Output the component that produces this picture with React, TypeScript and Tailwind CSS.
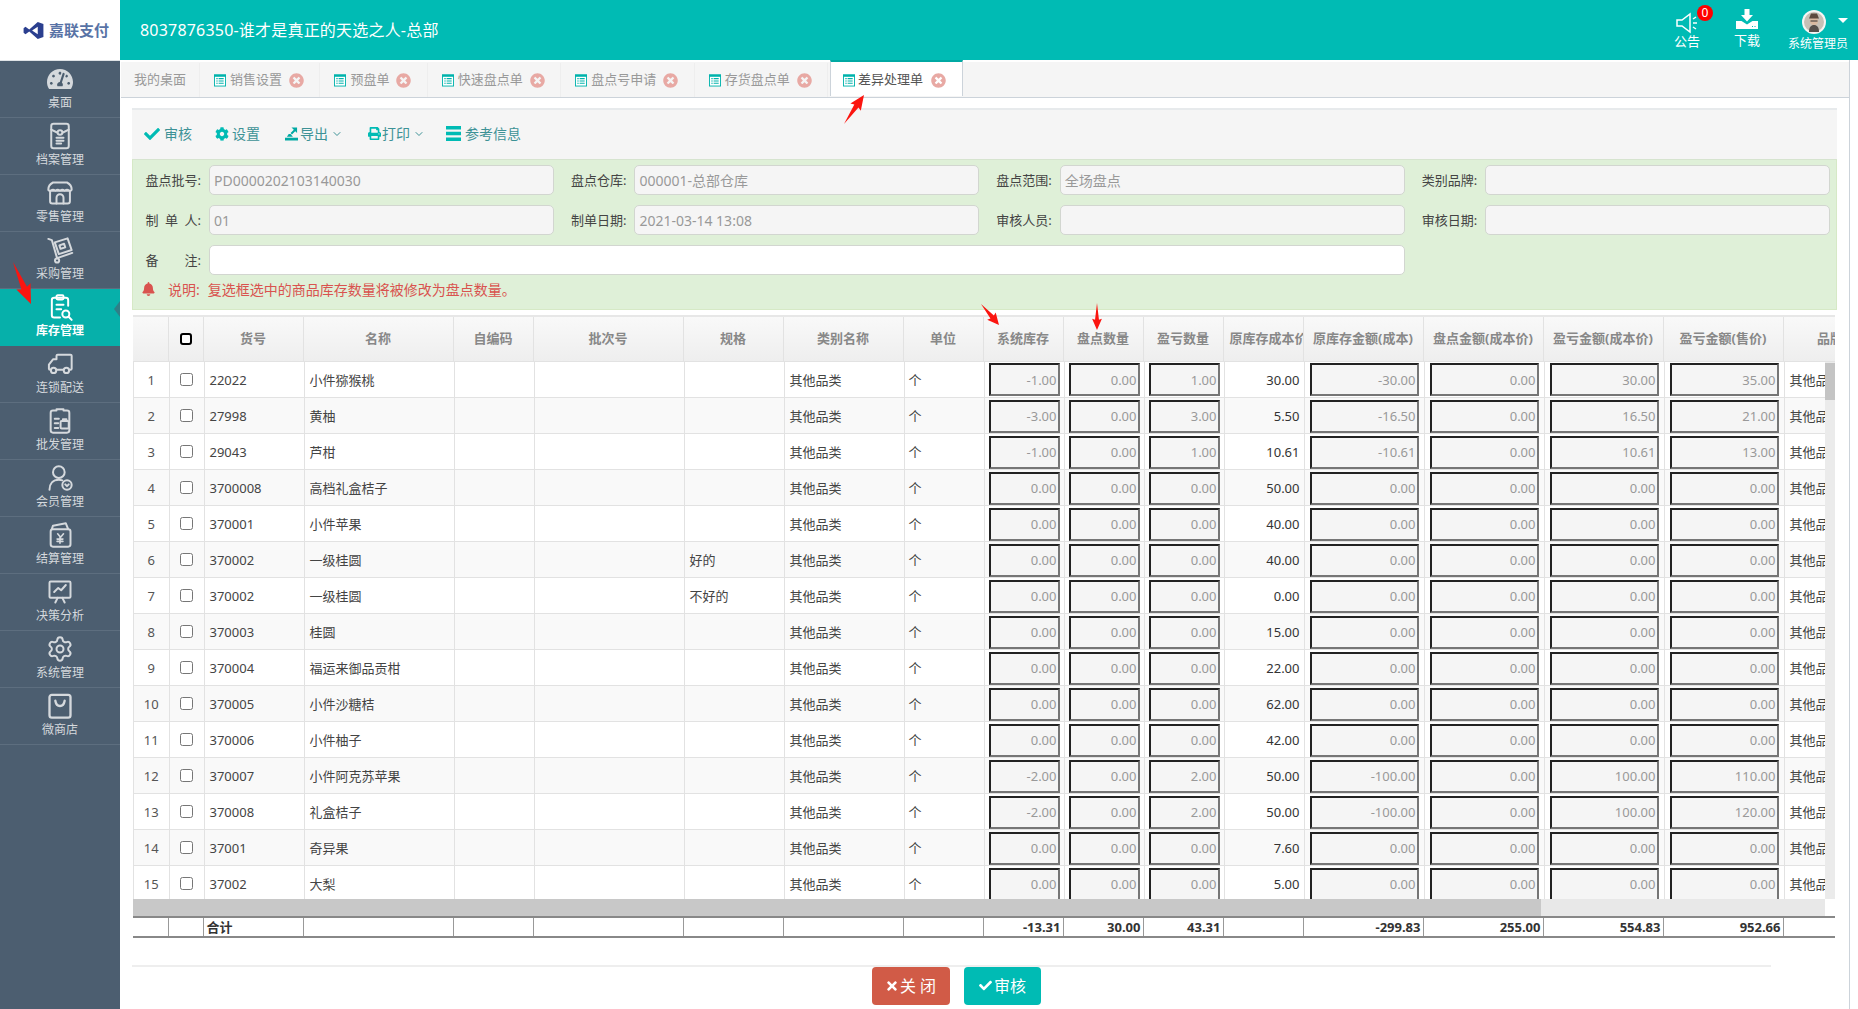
import React from 'react';
import { FaBell, FaCheck, FaCog, FaPrint, FaTachometerAlt, FaTimes, FaTimesCircle } from 'react-icons/fa';
import { ChevronDown, Settings } from 'lucide-react';

const FONT = 'font-["Noto_Sans","Noto_Sans_CJK_SC",sans-serif]';

// Sidebar icons, drawn in a 24 box
const strokeProps = { viewBox: '0 0 24 24', fill: 'none', stroke: 'currentColor', strokeWidth: 1.7, strokeLinecap: 'round' as const, strokeLinejoin: 'round' as const, className: 'w-[28px] h-[28px]' };

const ArchiveIcon = () => (
  <svg {...strokeProps}>
    <rect x="4.500" y="1.500" width="15" height="21" rx="2" />
    <path d="M4.500 6.500l5 2.500M19.500 6.500l-5 2.500M9 13.500h6M9 16h6M9 18.500h4" />
    <circle cx="12" cy="9" r="2" />
  </svg>
);
const StoreIcon = () => (
  <svg {...strokeProps}>
    <path d="M6 3h12q4 2 4 6 0 1-1 1H3q-1 0-1-1 0-4 4-6z" />
    <path d="M4 10q2-2 4 0q2-2 4 0q2-2 4 0q2-2 4 0" strokeWidth="1.200" />
    <path d="M3.500 10v9a2 2 0 0 0 2 2h13a2 2 0 0 0 2-2v-9" />
    <path d="M9 21v-5a3 3 0 0 1 6 0v5" />
  </svg>
);
const CartIcon = () => (
  <svg {...strokeProps}>
    <path d="M2 2.500l3 1 4.500 15.500 13-4.500" />
    <path d="M7.500 5.500l11-3.500 3.500 10-11 3.500z" />
    <path d="M11.500 8l4-1.300 1 3-4 1.300z" />
    <circle cx="9.500" cy="21" r="1.800" />
  </svg>
);
const StockIcon = () => (
  <svg {...strokeProps}>
    <path d="M12 21H7a2 2 0 0 1-2-2V6a2 2 0 0 1 2-2h10a2 2 0 0 1 2 2v5" />
    <rect x="9" y="2" width="6" height="3.5" rx="1" />
    <path d="M9 10h6M9 14h4" />
    <circle cx="17" cy="18" r="3" />
    <path d="M19.4 20.4L22 23" />
  </svg>
);
const TruckIcon = () => (
  <svg {...strokeProps}>
    <path d="M9 17h6M20 17h1a1 1 0 0 0 1-1V5a1 1 0 0 0-1-1H10a1 1 0 0 0-1 1v3H6l-3.5 4.5V16a1 1 0 0 0 1 1H4" />
    <circle cx="6.5" cy="17.5" r="2.3" />
    <circle cx="17.5" cy="17.5" r="2.3" />
  </svg>
);
const WholesaleIcon = () => (
  <svg {...strokeProps}>
    <path d="M9 3H6a2 2 0 0 0-2 2v15a2 2 0 0 0 2 2h12a2 2 0 0 0 2-2V5a2 2 0 0 0-2-2h-3" />
    <path d="M9 2h6M7.5 10H11M7.5 14h3M7.5 18h3" />
    <rect x="12.5" y="12" width="7" height="6.5" rx="1" />
    <path d="M14.5 12v-1.5h3V12" />
  </svg>
);
const MemberIcon = () => (
  <svg {...strokeProps}>
    <circle cx="11" cy="7" r="5" />
    <path d="M3 22c0-5 3-8.5 8-8.5 1 0 2 .2 3 .5" />
    <circle cx="18" cy="18" r="4" />
    <path d="M16.5 17.5l1.5 1.5 1.5-1.5" />
  </svg>
);
const WalletIcon = () => (
  <svg {...strokeProps}>
    <rect x="4" y="7" width="17" height="15" rx="2" />
    <path d="M5 7l1-3 11-2 2 5" />
    <path d="M10 11l2.500 3 2.500-3M12 14v5M9.500 15.500h5M9.500 17.500h5" strokeWidth="1.4" />
  </svg>
);
const ChartIcon = () => (
  <svg {...strokeProps}>
    <rect x="3" y="3" width="18" height="14" rx="1" />
    <path d="M7 12l3.500-3.500 2.500 2 4-4.500M8 21l2-4M16 21l-2-4" />
  </svg>
);
const BagIcon = () => (
  <svg {...strokeProps} strokeWidth={2}>
    <path d="M5 2.500h14a2 2 0 0 1 2 2V20a2 2 0 0 1-2 2H5a2 2 0 0 1-2-2V4.500a2 2 0 0 1 2-2z" />
    <path d="M8 7.500c.5 3 2 4.500 4 4.500s3.500-1.500 4-4.500" />
  </svg>
);

const MENU: { label: string; icon: React.ReactNode; active?: boolean }[] = [
  { label: '桌面', icon: <FaTachometerAlt className="w-[26px] h-[26px]" /> },
  { label: '档案管理', icon: <ArchiveIcon /> },
  { label: '零售管理', icon: <StoreIcon /> },
  { label: '采购管理', icon: <CartIcon /> },
  { label: '库存管理', icon: <StockIcon />, active: true },
  { label: '连锁配送', icon: <TruckIcon /> },
  { label: '批发管理', icon: <WholesaleIcon /> },
  { label: '会员管理', icon: <MemberIcon /> },
  { label: '结算管理', icon: <WalletIcon /> },
  { label: '决策分析', icon: <ChartIcon /> },
  { label: '系统管理', icon: <Settings className="w-[28px] h-[28px]" strokeWidth={1.7} /> },
  { label: '微商店', icon: <BagIcon /> },
];

const TABS = ['销售设置', '预盘单', '快速盘点单', '盘点号申请', '存货盘点单'];

const COLS = [
  'w-[35px]', 'w-[35px]', 'w-[100px]', 'w-[150px]', 'w-[80px]', 'w-[150px]', 'w-[100px]', 'w-[120px]', 'w-[80px]',
  'w-[80px]', 'w-[80px]', 'w-[80px]', 'w-[80px]', 'w-[120px]', 'w-[120px]', 'w-[120px]', 'w-[120px]', 'w-[120px]',
];

const HEADERS = [
  '', '', '货号', '名称', '自编码', '批次号', '规格', '类别名称', '单位', '系统库存', '盘点数量', '盈亏数量',
  '原库存成本价', '原库存金额(成本)', '盘点金额(成本价)', '盈亏金额(成本价)', '盈亏金额(售价)', '品牌名称',
];

const FOOT = ['', '', '合计', '', '', '', '', '', '', '-13.31', '30.00', '43.31', '', '-299.83', '255.00', '554.83', '952.66', ''];

type Row = [string, string, string, string, string, string, string, string, string, string, string];
const Z = '0.00';
const ROWS: Row[] = [
  ['22022', '小件猕猴桃', '', '-1.00', Z, '1.00', '30.00', '-30.00', Z, '30.00', '35.00'],
  ['27998', '黄柚', '', '-3.00', Z, '3.00', '5.50', '-16.50', Z, '16.50', '21.00'],
  ['29043', '芦柑', '', '-1.00', Z, '1.00', '10.61', '-10.61', Z, '10.61', '13.00'],
  ['3700008', '高档礼盒桔子', '', Z, Z, Z, '50.00', Z, Z, Z, Z],
  ['370001', '小件苹果', '', Z, Z, Z, '40.00', Z, Z, Z, Z],
  ['370002', '一级桂圆', '好的', Z, Z, Z, '40.00', Z, Z, Z, Z],
  ['370002', '一级桂圆', '不好的', Z, Z, Z, '0.00', Z, Z, Z, Z],
  ['370003', '桂圆', '', Z, Z, Z, '15.00', Z, Z, Z, Z],
  ['370004', '福运来御品贡柑', '', Z, Z, Z, '22.00', Z, Z, Z, Z],
  ['370005', '小件沙糖桔', '', Z, Z, Z, '62.00', Z, Z, Z, Z],
  ['370006', '小件柚子', '', Z, Z, Z, '42.00', Z, Z, Z, Z],
  ['370007', '小件阿克苏苹果', '', '-2.00', Z, '2.00', '50.00', '-100.00', Z, '100.00', '110.00'],
  ['370008', '礼盒桔子', '', '-2.00', Z, '2.00', '50.00', '-100.00', Z, '100.00', '120.00'],
  ['37001', '奇异果', '', Z, Z, Z, '7.60', Z, Z, Z, Z],
  ['37002', '大梨', '', Z, Z, Z, '5.00', Z, Z, Z, Z],
];

const ColGroup = () => (
  <colgroup>
    {COLS.map((c, i) => (
      <col key={i} className={c} />
    ))}
  </colgroup>
);

const TabIcon = () => (
  <svg viewBox="0 0 13 13" className="w-[12px] h-[13px] shrink-0">
    <rect x="0.500" y="0.500" width="12" height="12" fill="#fff" stroke="#00b3ac" />
    <path d="M0 0h13v2.500H0z" fill="#00b3ac" />
    <path d="M2.500 4.500h1.500M5 4.500h5.500M2.500 7h1.500M5 7h5.500M2.500 9.500h1.500M5 9.500h5.500" stroke="#00b3ac" strokeWidth="1.200" />
  </svg>
);

const Label = ({ children }: { children: React.ReactNode }) => (
  <label className="w-[68px] shrink-0 text-right text-[13px] leading-[30px] text-[#444] whitespace-pre mr-[8px]">{children}</label>
);

const Field = ({ label, value }: { label: string; value: string }) => (
  <div className="flex">
    <Label>{label}</Label>
    <input
      readOnly
      value={value}
      className="w-[345px] h-[30px] bg-[#f5f5f5] border border-[#d2d6d0] rounded-[5px] px-[4px] text-[14px] text-[#999] outline-none"
    />
  </div>
);

const CellInput = ({ value }: { value: string }) => (
  <input
    readOnly
    value={value}
    className="block w-full h-[33px] bg-[#f5f5f5] border-2 border-t-[#222] border-l-[#222] border-r-[#767676] border-b-[#767676] pr-[1px] text-right text-[13px] text-[#999] outline-none"
  />
);

function Arrow({ from, to, width }: { from: [number, number]; to: [number, number]; width: number }) {
  // tapered annotation arrow, thin at the tail and wide at the head
  const dx = to[0] - from[0];
  const dy = to[1] - from[1];
  const len = Math.hypot(dx, dy);
  const ux = dx / len;
  const uy = dy / len;
  const at = (t: number, w: number) => `${from[0] + dx * t - uy * w},${from[1] + dy * t + ux * w}`;
  const pts = [at(0, 0), at(0.62, width * 0.28), at(0.58, width * 0.7), at(1, 0), at(0.58, -width * 0.7), at(0.62, -width * 0.28)].join(' ');
  return <polygon points={pts} fill="#fb1510" />;
}

export default function App() {
  return (
    <div className={`${FONT} relative w-[1858px] h-[1009px] overflow-hidden bg-white text-[13px] text-[#555]`}>
      {/* top bar */}
      <header className="flex h-[60px]">
        <div className="w-[120px] flex items-center bg-white pl-[23px]">
          <svg viewBox="0 0 21 18" className="w-[21px] h-[17px] mr-[5px] shrink-0">
            <path fillRule="evenodd" d="M15 0l6 2v14l-6 2-9-8-4 3-2-1.500v-5L2 5l4 3zM15 5l-6 4 6 4z" fill="#2b3f8f" />
          </svg>
          <span className="text-[15px] font-bold text-[#5873a6] whitespace-nowrap leading-none">嘉联支付</span>
        </div>
        <div className="flex-1 flex items-center bg-[#00bbb4] text-white pl-[20px] pr-[10px]">
          <span className="text-[16px] tracking-[0.2px]">8037876350-谁才是真正的天选之人-总部</span>
          <div className="ml-auto flex items-start gap-[34px] self-start">
            <div className="relative w-[26px] flex flex-col items-center pt-[11px]">
              <svg viewBox="0 0 24 24" fill="none" stroke="#fff" strokeWidth="1.500" className="w-[24px] h-[24px] mb-[-2px]">
                <path d="M2 9h5l8-6v18l-8-6H2z" />
                <path d="M18 8l3-2M18 12h4M18 16l3 2" />
              </svg>
              <span className="text-[13px] leading-[17px]">公告</span>
              <span className="absolute left-[23px] top-[5px] w-[16px] h-[16px] rounded-full bg-[#f00] text-center text-[12px] leading-[16px]">0</span>
            </div>
            <div className="w-[26px] flex flex-col items-center pt-[9px] mr-[-6px]">
              <svg viewBox="0 0 22 20" fill="#fff" className="w-[22px] h-[20px] mb-[3px]">
                <path d="M8.500 0h5v6h3.500L11 12.500 5 6h3.500z" />
                <path d="M0 12h5.500l5.500 3.500 5.500-3.500H22v8H0z" />
                <path d="M16 17h1v1h-1zM18.500 17h1v1h-1z" fill="#00bbb4" />
              </svg>
              <span className="text-[13px] leading-[17px]">下载</span>
            </div>
            <div className="relative w-[60px] flex flex-col items-center pt-[10px]">
              <svg viewBox="0 0 24 24" className="w-[24px] h-[24px] mr-[9px]">
                <circle cx="12" cy="12" r="12" fill="#f5f5f3" />
                <circle cx="12" cy="12" r="10" fill="#c6c0b6" />
                <path d="M7 22c0-5 2-7 5-7s5 2 5 7z" fill="#55504c" />
                <circle cx="12" cy="11" r="4" fill="#d8b9a0" />
                <path d="M7 8.500h10L15 3.500H9z" fill="#5c4a3e" />
                <path d="M8.500 11h7" stroke="#333" />
              </svg>
              <span className="absolute right-[0px] top-[18px] border-x-[5px] border-x-transparent border-t-[5px] border-t-white" />
              <span className="text-[12px] leading-[17px] whitespace-nowrap mt-[1px]">系统管理员</span>
            </div>
          </div>
        </div>
      </header>

      <div className="flex h-[949px]">
        {/* side menu */}
        <nav className="w-[120px] shrink-0 bg-[#4c5e70] border-t border-[#dfe3e6]">
          {MENU.map((m) => (
            <div
              key={m.label}
              className={`relative h-[57px] flex flex-col items-center pt-[3px] border-b border-[#5d6e7f] ${m.active ? 'bg-[#06b0aa] text-white font-bold border-[#06b0aa]' : 'text-[#d5d9dd]'}`}
            >
              <div className="h-[30px] flex items-center justify-center">{m.icon}</div>
              <span className="text-[12px] leading-[16px] mt-[1px]">{m.label}</span>
              {m.active && (
                <span className="absolute right-0 top-[12px] border-y-[8px] border-y-transparent border-r-[6px] border-r-[#4c5e70] opacity-60" />
              )}
            </div>
          ))}
        </nav>

        <main className="w-[1729px] ml-[1px] border-r border-[#ccd3da] pt-[2px]">
          {/* tab strip */}
          <div className="relative flex h-[36px] pt-[1px] bg-[#f5f5f5] border-b border-[#ccd3da]">
            <div className="flex items-center h-[34px] px-[13px] text-[#999] border-r border-[#eeeeee] whitespace-nowrap">我的桌面</div>
            {TABS.map((t) => (
              <div key={t} className="flex items-center h-[34px] pl-[14px] pr-[15.4px] text-[#999] border-r border-[#eeeeee] whitespace-nowrap">
                <TabIcon />
                <span className="ml-[4px] mr-[7px]">{t}</span>
                <FaTimesCircle className="w-[15px] h-[15px] text-[#e8a9a4]" />
              </div>
            ))}
            <div className="absolute left-[709px] top-[-2px] h-[36px] flex items-center pl-[12px] pr-[16px] pt-[2px] bg-white border-t-2 border-t-[#00a9a3] border-x border-x-[#ccd3da] text-[#555] whitespace-nowrap">
              <TabIcon />
              <span className="ml-[3px] mr-[8px]">差异处理单</span>
              <FaTimesCircle className="w-[15px] h-[15px] text-[#e8a9a4]" />
            </div>
          </div>

          <div className="pl-[11px] pt-[10px]">
            {/* toolbar */}
            <div className="w-[1705px] h-[51px] flex items-center pl-[12px] pb-[2px] bg-[#f5f5f5] border-t-2 border-[#e7eaec] text-[14px] text-[#3d9296]">
              <span className="flex items-center w-[71px]"><FaCheck className="w-[16px] h-[16px] text-[#00bbb4] mr-[4px]" />审核</span>
              <span className="flex items-center w-[70px]"><FaCog className="w-[14px] h-[14px] text-[#00bbb4] mr-[3px]" />设置</span>
              <span className="flex items-center w-[83px]">
                <svg viewBox="0 0 14 14" fill="#00a9a3" className="w-[13px] h-[14px] mr-[2px]">
                  <path d="M0 11h14v3H0z" />
                  <path d="M2 10l2-3h2l2.500 3z" />
                  <path d="M7 0h6v6l-2-2-3.500 3.500-1.500-1.500L9.500 2.500z" />
                </svg>
                导出<ChevronDown className="w-[12px] h-[12px] ml-[3px]" />
              </span>
              <span className="flex items-center w-[78px]"><FaPrint className="w-[13px] h-[13px] text-[#00bbb4] mr-px" />打印<ChevronDown className="w-[12px] h-[12px] ml-[3px]" /></span>
              <span className="flex items-center">
                <svg viewBox="0 0 15 15" fill="#00bbb4" className="w-[15px] h-[15px] mr-[4px]">
                  <path d="M0 0h15v3.500H0zM0 5.700h15v3.500H0zM0 11.400h15v3.500H0z" />
                </svg>
                参考信息
              </span>
            </div>

            {/* form */}
            <div className="w-[1705px] h-[151px] pt-[5px] bg-[#dff0d8] border border-[#d6e9c6] border-t-[#d6e4cf]">
              <div className="grid grid-cols-[425.4px_425.4px_425.4px_425.4px] gap-y-[10px]">
                <Field label="盘点批号:" value="PD0000202103140030" />
                <Field label="盘点仓库:" value="000001-总部仓库" />
                <Field label="盘点范围:" value="全场盘点" />
                <Field label="类别品牌:" value="" />
                <Field label={'制\u2002单\u2002人:'} value="01" />
                <Field label="制单日期:" value="2021-03-14 13:08" />
                <Field label="审核人员:" value="" />
                <Field label="审核日期:" value="" />
                <div className="col-span-3 flex">
                  <Label>{'备\u2003\u2003注:'}</Label>
                  <input readOnly className="w-[1196px] h-[30px] bg-white border border-[#d2d6d0] rounded-[5px] outline-none" />
                </div>
              </div>
              <div className="flex items-center h-[20px] mt-[4px] pl-[9px] text-[14px] text-[#d9534f]">
                <FaBell className="w-[13px] h-[14px] mr-[13px]" />
                <span className="mr-[8px]">说明:</span>
                <span>复选框选中的商品库存数量将被修改为盘点数量。</span>
              </div>
            </div>

            {/* grid */}
            <div className="w-[1702px] ml-[1px] mt-[5px] overflow-hidden">
              <table className="table-fixed w-[1770px] border-t-2 border-[#e7e7e7]">
                <ColGroup />
                <thead>
                  <tr className="h-[45px] bg-gradient-to-b from-[#f9f9f9] to-[#eeeeee]">
                    {HEADERS.map((h, i) => (
                      <th key={i} className="px-[6px] border-r border-[#e2e2e2] border-b border-b-[#e2e2e2] font-bold text-[13px] text-[#888] whitespace-nowrap overflow-hidden">
                        {i === 1 ? (
                          <input type="checkbox" readOnly className="appearance-none block mx-auto w-[12px] h-[12px] bg-white border-2 border-black rounded-[3px]" />
                        ) : (
                          h
                        )}
                      </th>
                    ))}
                  </tr>
                </thead>
              </table>

              <div className="flex h-[537px]">
                <div className="w-[1692px] overflow-hidden border-l border-[#e2e2e2]">
                  <table className="table-fixed w-[1770px] text-[13px] text-[#444]">
                    <ColGroup />
                    <tbody>
                      {ROWS.map((r, i) => (
                        <tr key={i} className={`h-[36px] border-b border-[#e2e2e2] ${i % 2 ? 'bg-[#f9f9f9]' : 'bg-white'}`}>
                          <td className="border-r border-[#e2e2e2] pt-[2px] text-center text-[#555]">{i + 1}</td>
                          <td className="border-r border-[#e2e2e2]">
                            <input type="checkbox" readOnly className="block mx-auto w-[13px] h-[13px]" />
                          </td>
                          <td className="border-r border-[#e2e2e2] pt-[2px] px-[5px]">{r[0]}</td>
                          <td className="border-r border-[#e2e2e2] pt-[2px] px-[5px] whitespace-nowrap">{r[1]}</td>
                          <td className="border-r border-[#e2e2e2]" />
                          <td className="border-r border-[#e2e2e2]" />
                          <td className="border-r border-[#e2e2e2] pt-[2px] px-[5px]">{r[2]}</td>
                          <td className="border-r border-[#e2e2e2] pt-[2px] px-[5px]">其他品类</td>
                          <td className="border-r border-[#e2e2e2] pt-[2px] px-[4px]">个</td>
                          {[r[3], r[4], r[5]].map((v, k) => (
                            <td key={k} className="border-r border-[#e2e2e2] pt-[1px] px-[4px]"><CellInput value={v} /></td>
                          ))}
                          <td className="border-r border-[#e2e2e2] pt-[2px] px-[4px] text-right text-[#333]">{r[6]}</td>
                          {[r[7], r[8], r[9], r[10]].map((v, k) => (
                            <td key={k} className="border-r border-[#e2e2e2] pt-[1px] px-[5px]"><CellInput value={v} /></td>
                          ))}
                          <td className="pt-[2px] px-[5px] whitespace-nowrap">其他品类</td>
                        </tr>
                      ))}
                    </tbody>
                  </table>
                </div>
                <div className="w-[10px] bg-[#ebebeb]">
                  <div className="h-[37px] mt-[1px] bg-[#c4c4c4]" />
                </div>
              </div>

              <div className="flex h-[17px]">
                <div className="w-[1692px] bg-[#e8e8e8]">
                  <div className="w-[1408px] h-full bg-[#c8c8c8]" />
                </div>
              </div>

              <table className="table-fixed w-[1770px] border-y-2 border-[#888] text-[13px] text-[#333]">
                <ColGroup />
                <tbody>
                  <tr className="h-[18px]">
                    {FOOT.map((f, i) => (
                      <td key={i} className={`border-r border-[#999] pl-[3px] pr-[2px] font-bold leading-[18px] ${i > 2 ? 'text-right' : ''}`}>{f}</td>
                    ))}
                  </tr>
                </tbody>
              </table>
            </div>

            {/* bottom buttons */}
            <div className="w-[1639px] mt-[27px] border-t-2 border-[#eeeeee] flex justify-center gap-[14px] pl-[10px]">
              <button className="w-[78px] h-[38px] rounded-[4px] bg-[#d15b47] text-white text-[16px] flex items-center justify-center">
                <FaTimes className="w-[12px] h-[14px] mr-[2px]" />关 闭
              </button>
              <button className="w-[77px] h-[38px] rounded-[4px] bg-[#00bbb4] text-white text-[16px] flex items-center justify-center">
                <FaCheck className="w-[13px] h-[13px] mr-[2px]" />审核
              </button>
            </div>
          </div>
        </main>
      </div>

      {/* red annotation arrows */}
      <svg viewBox="0 0 1858 1009" className="absolute inset-0 w-[1858px] h-[1009px] pointer-events-none">
        <Arrow from={[13, 262]} to={[31, 304]} width={11} />
        <Arrow from={[844, 124]} to={[864, 95]} width={9} />
        <Arrow from={[981, 304]} to={[999, 325]} width={8} />
        <Arrow from={[1097, 303]} to={[1097, 330]} width={7} />
      </svg>
    </div>
  );
}
